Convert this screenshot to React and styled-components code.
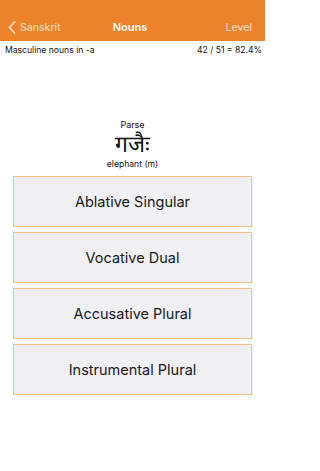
import React from 'react'
import styled, { createGlobalStyle } from 'styled-components'

const Global = createGlobalStyle`
body {
  margin: 0;
  background: #fff;
  font-family: Inter, "Liberation Sans", Arial, sans-serif;
}
`

const answers = ['Ablative Singular', 'Vocative Dual', 'Accusative Plural', 'Instrumental Plural']

function App() {
  return (
    <Screen>
      <Global />
      <NavBar>
        <Back>
          <svg width="8" height="13" viewBox="0 0 8 13">
            <path d="M6.5 1 L1.5 6.5 L6.5 12" fill="none" stroke="#fbe2c8" strokeWidth="1.8" strokeLinecap="round" strokeLinejoin="round" />
          </svg>
          <span>Sanskrit</span>
        </Back>
        <Title>Nouns</Title>
        <NavAction>Level</NavAction>
      </NavBar>
      <InfoRow>
        <span>Masculine nouns in -a</span>
        <span>42 / 51 = 82.4%</span>
      </InfoRow>
      <Question>
        <Prompt>Parse</Prompt>
        <Word>गजैः</Word>
        <Meaning>elephant (m)</Meaning>
      </Question>
      <Choices>
        {answers.map((a) => (
          <Choice key={a}>{a}</Choice>
        ))}
      </Choices>
    </Screen>
  )
}

export default App

const Screen = styled.div`
width: 265px;
height: 471px;
background: #fff;
overflow: hidden;
`

const NavBar = styled.div`
height: 41px;
background: #ec8229;
display: grid;
grid-template-columns: 1fr auto 1fr;
align-items: center;
padding: 13px 13px 0 8px;
box-sizing: border-box;
color: #fbe2c8;
font-size: 10.6px;
`

const Back = styled.div`
display: flex;
align-items: center;
gap: 4px;
`

const Title = styled.div`
color: #fff;
font-weight: 600;
font-size: 11px;
`

const NavAction = styled.div`
justify-self: end;
`

const InfoRow = styled.div`
display: flex;
justify-content: space-between;
padding: 2px 3px 0 5px;
font-size: 8.6px;
color: #111;
height: 14px;
align-items: center;
`

const Question = styled.div`
display: flex;
flex-direction: column;
align-items: center;
margin-top: 62px;
color: #111;
`

const Prompt = styled.div`
font-size: 9px;
line-height: 11px;
`

const Word = styled.div`
font-size: 23px;
line-height: 28px;
font-weight: 500;
`

const Meaning = styled.div`
font-size: 8.6px;
line-height: 12px;
`

const Choices = styled.div`
display: flex;
flex-direction: column;
gap: 5px;
margin: 6px 13px 0 13px;
`

const Choice = styled.div`
height: 51px;
box-sizing: border-box;
border: 1px solid #f5bd82;
background: #efeff4;
display: flex;
align-items: center;
justify-content: center;
font-size: 14.5px;
color: #1a1a1a;
`
